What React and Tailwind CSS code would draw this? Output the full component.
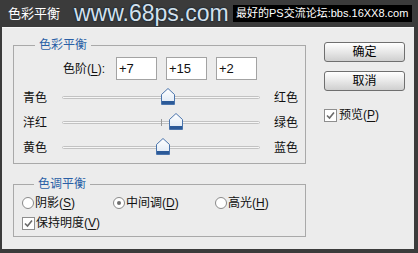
import React from "react";

const font = "font-['Liberation_Sans','Noto_Sans_CJK_SC',sans-serif]";

const sliders = [
  { left: "青色", right: "红色", value: 7 },
  { left: "洋红", right: "绿色", value: 15, tick: true },
  { left: "黄色", right: "蓝色", value: 2 },
];

const Thumb = () => (
  <svg width="14" height="17" viewBox="0 0 14 17">
    <defs>
      <linearGradient id="tg" x1="0" y1="0" x2="0" y2="1">
        <stop offset="0" stopColor="#ffffff" />
        <stop offset="1" stopColor="#dde8f4" />
      </linearGradient>
    </defs>
    <path d="M7 0.5 L13.5 6.5 L13.5 16.5 L0.5 16.5 L0.5 6.5 Z" fill="url(#tg)" stroke="#4a74ac" />
    <rect x="1" y="13" width="12" height="3" fill="#2c5a98" />
  </svg>
);

const Checkbox = () => (
  <span className="shrink-0 w-[13px] h-[13px] border border-[#8e8e8e] bg-white flex items-center justify-center">
    <svg width="9" height="9" viewBox="0 0 9 9">
      <path d="M1 4.5 L3.5 7 L8 1.5" fill="none" stroke="#6a6a6a" strokeWidth="1.6" />
    </svg>
  </span>
);

const Radio = ({ checked }) => (
  <span className="shrink-0 w-[12px] h-[12px] rounded-full border border-[#8a8a8a] bg-white flex items-center justify-center">
    {checked && <span className="w-[4px] h-[4px] rounded-full bg-[#6e6e6e]" />}
  </span>
);

const Key = ({ children }) => <span className="underline underline-offset-2">{children}</span>;

const Button = ({ children }) => (
  <button className="h-[20px] w-[81px] rounded-[3px] border border-[#6f6f6f] bg-gradient-to-b from-[#ffffff] via-[#e8e8e8] to-[#cfcfcf] text-[12px] leading-none text-black">
    {children}
  </button>
);

export default function App() {
  return (
    <div className={`w-[418px] h-[253px] bg-[#3b3b3b] flex flex-col ${font} text-[12px] text-[#111]`}>
      <div className="h-[27px] flex items-center whitespace-nowrap">
        <span className="ml-[8px] w-[62px] text-white text-[13px]">色彩平衡</span>
        <span className="ml-[4px] w-[159px] text-[23px] leading-none text-[#d3e0ec] [text-shadow:0_0_2px_#081a2c,0_0_1px_#081a2c]">
          www.68ps.com
        </span>
        <span className="h-[17px] w-[179px] bg-black text-white text-[11px] leading-[17px] pl-[3px] overflow-hidden">
          最好的PS交流论坛:bbs.16XX8.com
        </span>
      </div>
      <div className="flex-1 ml-[2px] mr-[4px] mb-[4px] bg-[#ececec] border-t border-[#f8f8f8] flex">
        <div className="ml-[11px] mt-[10px] w-[293px] shrink-0 flex flex-col">
          <fieldset className="border border-[#a9a9a9] pl-[9px] pb-[3px]">
            <legend className="ml-[12px] px-[4px] text-[#2a5fa6] leading-[14px]">色彩平衡</legend>
            <div className="mt-[5px] h-[23px] flex items-center">
              <span className="ml-[40px] w-[46px] whitespace-nowrap">
                色阶(<Key>L</Key>):
              </span>
              <div className="ml-[7px] flex gap-[9px]">
                {["+7", "+15", "+2"].map((v) => (
                  <div
                    key={v}
                    className="w-[41px] h-[23px] bg-white border border-[#a3a3a3] text-[13px] leading-[21px] pl-[2px]"
                  >
                    {v}
                  </div>
                ))}
              </div>
            </div>
            <div className="mt-[5px] flex flex-col">
              {sliders.map((s) => (
                <div key={s.left} className="h-[25px] flex items-center whitespace-nowrap">
                  <span className="w-[39px] shrink-0">{s.left}</span>
                  <div className="relative shrink-0 w-[198px] h-[3px] rounded-full border border-[#c2c2c2] bg-[#f6f6f6]">
                    {s.tick && <span className="absolute left-[98px] top-[-3px] w-[1px] h-[7px] bg-[#9a9a9a]" />}
                    <span
                      className="absolute top-[-9px] -translate-x-1/2"
                      style={{ left: `${50 + s.value / 2}%` }}
                    >
                      <Thumb />
                    </span>
                  </div>
                  <span className="ml-[14px] shrink-0">{s.right}</span>
                </div>
              ))}
            </div>
          </fieldset>
          <fieldset className="mt-[13px] border border-[#a9a9a9] pl-[8px] pb-[6px]">
            <legend className="ml-[12px] px-[4px] text-[#2a5fa6] leading-[14px]">色调平衡</legend>
            <div className="mt-[5px] h-[14px] flex items-center whitespace-nowrap">
              <label className="w-[91px] flex items-center gap-[1px]">
                <Radio />
                <span>
                  阴影(<Key>S</Key>)
                </span>
              </label>
              <label className="w-[102px] flex items-center gap-[1px]">
                <Radio checked />
                <span>
                  中间调(<Key>D</Key>)
                </span>
              </label>
              <label className="flex items-center gap-[1px]">
                <Radio />
                <span>
                  高光(<Key>H</Key>)
                </span>
              </label>
            </div>
            <div className="mt-[6px] h-[14px] flex items-center gap-[1px] whitespace-nowrap">
              <Checkbox />
              <span>
                保持明度(<Key>V</Key>)
              </span>
            </div>
          </fieldset>
        </div>
        <div className="ml-[18px] mt-[14px] flex flex-col">
          <Button>确定</Button>
          <div className="mt-[9px]">
            <Button>取消</Button>
          </div>
          <div className="mt-[15px] flex items-center gap-[2px] whitespace-nowrap">
            <Checkbox />
            <span>
              预览(<Key>P</Key>)
            </span>
          </div>
        </div>
      </div>
    </div>
  );
}
